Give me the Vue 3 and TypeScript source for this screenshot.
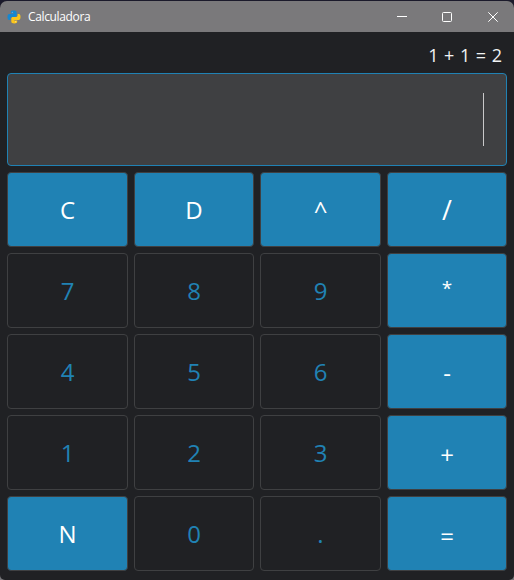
<script setup lang="ts">
interface Key {
  label: string
  accent: boolean
  glyph?: string
}

const accents = 'CD^/*-+N='
const glyphs: Record<string, string> = {
  '/': 'slash',
  '*': 'star',
  '-': 'minus',
  '+': 'math',
  '=': 'math',
}
const keys: Key[] = [...'CD^/789*456-123+N0.='].map((label) => ({
  label,
  accent: accents.includes(label),
  glyph: glyphs[label],
}))
const history = '1 + 1 = 2'
</script>

<template>
  <div class="desktop">
    <main class="window">
      <header class="titlebar">
        <svg class="logo" viewBox="0 0 14 14" width="14" height="14">
          <path fill="#1687d0" d="M3.8 3.6V2.1C3.8.9 4.9.5 6.7.5s3 .5 3 1.7v3c0 1-.7 1.7-1.7 1.7H5.2c-1.1 0-1.8.7-1.8 1.8v1.2H2.3C1 9.900.5 8.700.5 6.900s.6-2.900 1.900-2.900h4.400v-.4z" />
          <path fill="#fbc51b" d="M10.200 10.400v1.400c0 1.200-1.100 1.700-2.900 1.700s-3-.5-3-1.700v-3c0-1 .7-1.700 1.700-1.700h2.800c1.100 0 1.800-.7 1.800-1.800V4.100h1.100c1.300 0 1.800 1.200 1.800 3s-.6 2.900-1.900 2.900H7.200v.4z" />
          <circle cx="5.300" cy="2.200" r=".55" fill="#8fc4e4" />
          <circle cx="8.700" cy="11.800" r=".55" fill="#fff0b0" />
        </svg>
        <span class="title">Calculadora</span>
        <div class="controls">
          <svg viewBox="0 0 10 10" width="10" height="10"><path d="M0 4.500h10" /></svg>
          <svg viewBox="0 0 10 10" width="10" height="10"><rect x=".5" y=".5" width="9" height="9" rx="1" /></svg>
          <svg viewBox="0 0 10 10" width="10" height="10"><path d="M.3.3l9.400 9.400M9.700.3L.3 9.700" /></svg>
        </div>
      </header>
      <div class="history">{{ history }}</div>
      <div class="display"><span class="caret"></span></div>
      <div class="keypad">
        <button v-for="key in keys" :key="key.label" class="key" :class="[key.glyph, { accent: key.accent }]">{{ key.label }}</button>
      </div>
    </main>
  </div>
</template>

<style>
body {
  background: #202124;
}
</style>

<style scoped>
.desktop {
  box-sizing: border-box;
  width: 514px;
  height: 580px;
  padding-top: 1px;
  background: linear-gradient(#1b1a2b 50%, #77777a 50%);
  font-family: "Segoe UI", "Open Sans", "Noto Sans", sans-serif;
  overflow: hidden;
}
.window {
  height: 579px;
  border-radius: 7px 7px 5px 5px;
  background: #202124;
  overflow: hidden;
}
.titlebar {
  display: flex;
  align-items: center;
  height: 31px;
  padding: 0 16px 0 7px;
  background: #7a797b;
  color: #fff;
}
.logo {
  flex: none;
}
.title {
  margin-left: 7px;
  font-size: 12px;
  line-height: 16px;
  letter-spacing: -0.35px;
}
.controls {
  display: flex;
  gap: 35px;
  margin-left: auto;
}
.controls svg {
  fill: none;
  stroke: #fff;
  stroke-width: 1;
}
.controls svg:last-child {
  margin-left: 1px;
}
.history {
  height: 41px;
  padding-right: 12px;
  color: #f1f3f4;
  font-size: 18px;
  line-height: 46px;
  text-align: right;
  word-spacing: 0.9px;
}
.display {
  box-sizing: border-box;
  display: flex;
  align-items: center;
  justify-content: flex-end;
  height: 93px;
  margin: 0 7px 6px;
  padding-right: 22px;
  border: 1px solid #2082b4;
  border-radius: 4px;
  background: #3f4042;
}
.caret {
  width: 1px;
  height: 53px;
  background: #c9c9ca;
}
.keypad {
  display: grid;
  grid-template-columns: 121px 120px 121px 120px;
  grid-auto-rows: 75px;
  gap: 6px;
  padding: 0 7px;
}
.key {
  margin: 0;
  padding: 0 0 1px;
  border: 1px solid #3f4042;
  border-radius: 4px;
  background: #202124;
  color: #2082b4;
  font: inherit;
  font-size: 24px;
  line-height: 33px;
}
.accent {
  background: #2082b4;
  color: #fff;
}
.slash {
  padding-top: 1px;
  font-size: 27px;
}
.star {
  padding-bottom: 4px;
  font-size: 19px;
}
.minus {
  padding-top: 2px;
}
.math {
  padding-top: 4px;
}
</style>
